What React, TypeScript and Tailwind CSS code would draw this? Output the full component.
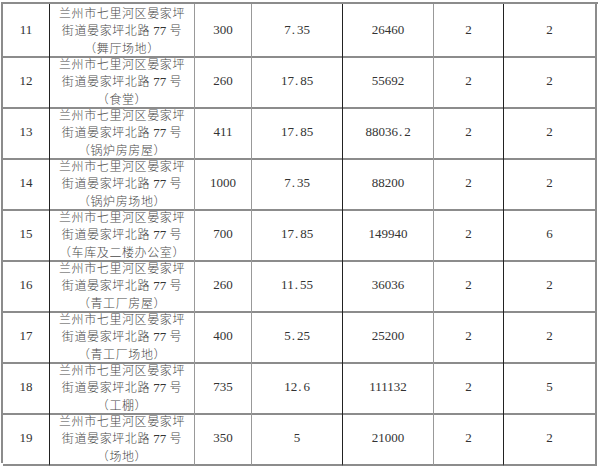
import React from "react";

const rows: [string, string, string, string, string, string, string][] = [
  ["11", "（舞厅场地）", "300", "7.35", "26460", "2", "2"],
  ["12", "（食堂）", "260", "17.85", "55692", "2", "2"],
  ["13", "（锅炉房房屋）", "411", "17.85", "88036.2", "2", "2"],
  ["14", "（锅炉房场地）", "1000", "7.35", "88200", "2", "2"],
  ["15", "（车库及二楼办公室）", "700", "17.85", "149940", "2", "6"],
  ["16", "（青工厂房屋）", "260", "11.55", "36036", "2", "2"],
  ["17", "（青工厂场地）", "400", "5.25", "25200", "2", "2"],
  ["18", "（工棚）", "735", "12.6", "111132", "2", "5"],
  ["19", "（场地）", "350", "5", "21000", "2", "2"],
];

const num =
  "flex items-center justify-center text-[13px] text-[#333] [font-family:'Liberation_Serif',serif] border-b-2 border-b-[#8c8c8c]";

function Num({ v }: { v: string }) {
  const parts = v.split(".");
  if (parts.length === 1) return <>{v}</>;
  return (
    <>
      {parts[0]}
      <span className="pl-[1px] pr-[2px]">.</span>
      {parts[1]}
    </>
  );
}

export default function App() {
  return (
    <div className="w-[600px] h-[467px] bg-white pt-[2px] pl-[1px]">
      <div className="w-[597px] border-t-2 border-l-2 border-[#8c8c8c]">
        {rows.map((r) => (
          <div
            key={r[0]}
            className="grid grid-cols-[47px_145px_57px_91px_91px_70px_93px] h-[51px]"
          >
            <div className={`${num} border-r border-r-[#222]`}>{r[0]}</div>
            <div className="flex flex-col items-center justify-center border-r border-r-[#999] border-b-2 border-b-[#8c8c8c] text-[12px] leading-[17px] tracking-[0.6px] font-light text-[#4a4a4a] [font-family:'Noto_Sans_CJK_SC',sans-serif]">
              <div>兰州市七里河区晏家坪</div>
              <div>
                街道晏家坪北路 <span className="[font-family:'Liberation_Serif',serif] text-[13px] tracking-normal font-normal text-[#333]">77</span> 号
              </div>
              <div>{r[1]}</div>
            </div>
            <div className={`${num} border-r border-r-[#999]`}><Num v={r[2]} /></div>
            <div className={`${num} border-r border-r-[#222]`}><Num v={r[3]} /></div>
            <div className={`${num} border-r border-r-[#999]`}><Num v={r[4]} /></div>
            <div className={`${num} border-r border-r-[#222]`}>{r[5]}</div>
            <div className={`${num} border-r-2 border-r-[#8c8c8c]`}>{r[6]}</div>
          </div>
        ))}
      </div>
    </div>
  );
}
